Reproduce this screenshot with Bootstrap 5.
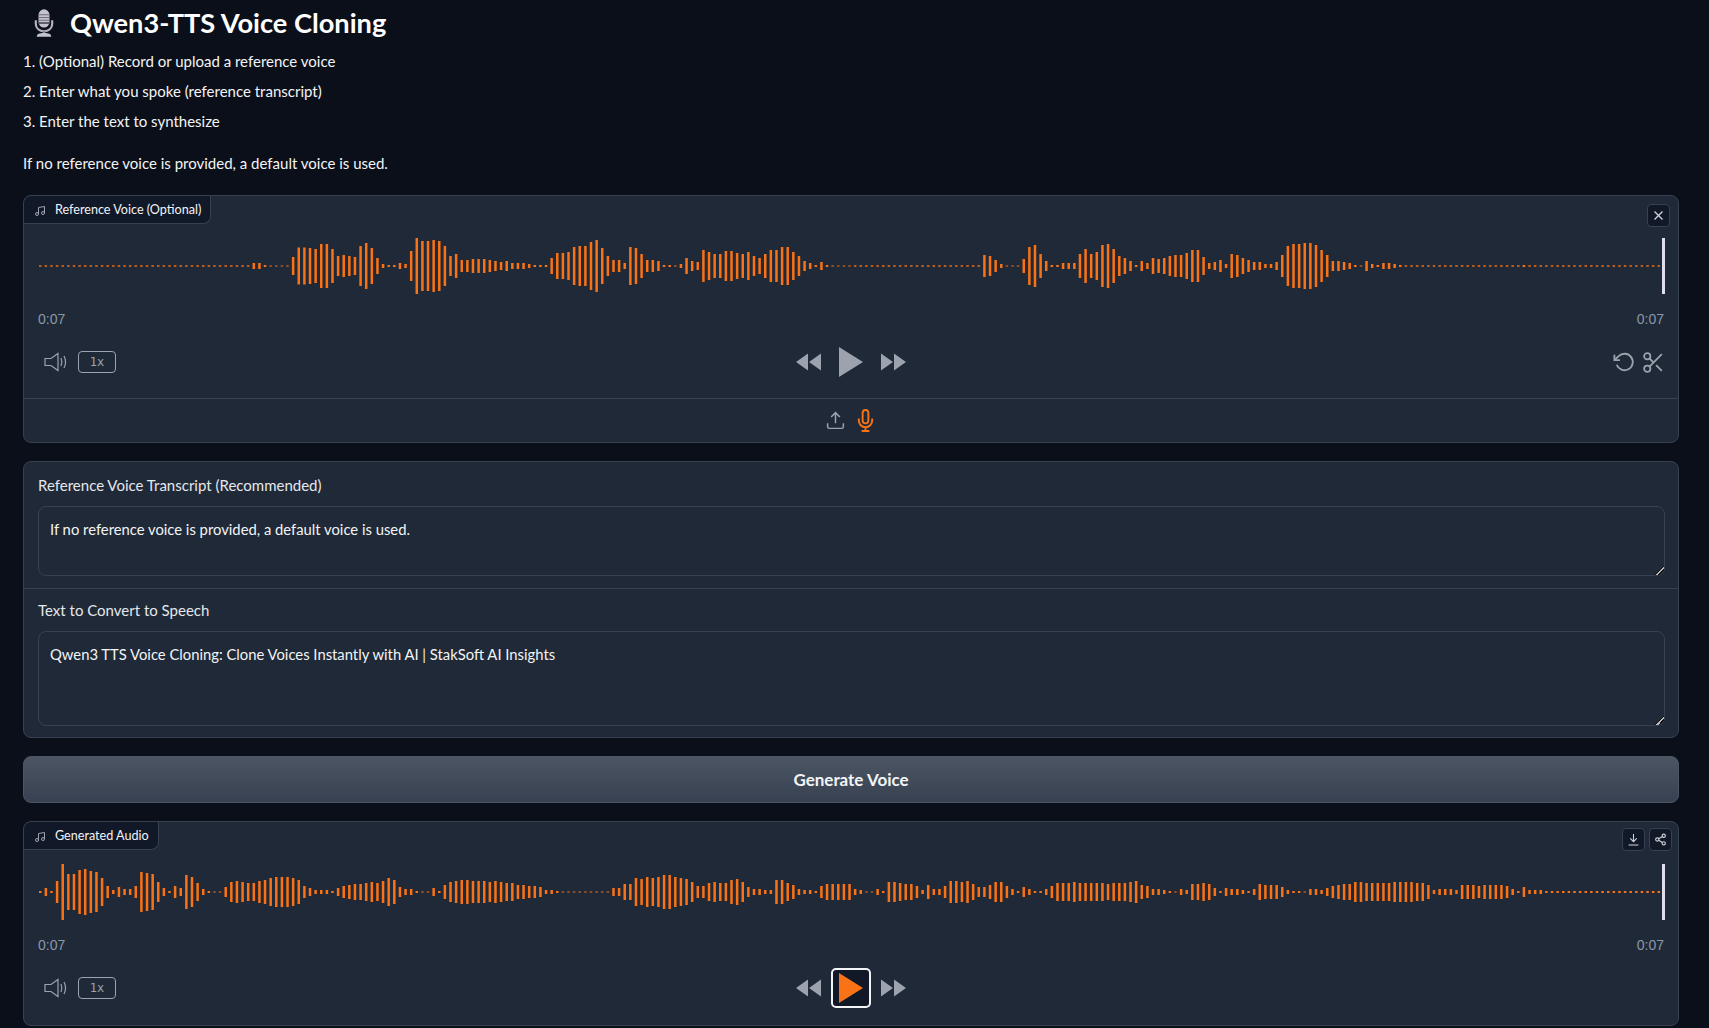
<!DOCTYPE html>
<html lang="en" data-bs-theme="dark">
<head>
  <meta charset="UTF-8">
  <meta name="viewport" content="width=device-width, initial-scale=1.0">
  <title>Qwen3-TTS Voice Cloning</title>
  <link href="https://cdn.jsdelivr.net/npm/bootstrap@5.3.2/dist/css/bootstrap.min.css" rel="stylesheet">
  <style>
    body {
      background-color: #0b0f19;
      color: #f3f4f6;
      font-family: Lato, "Liberation Sans", sans-serif;
      font-size: 15px;
      padding: 0 30px 0 23px;
      overflow: hidden;
    }
    .title-mic { margin-left: 11px; margin-right: 16px; }
    .app-title {
      font-size: 27.2px;
      font-weight: 700;
      line-height: 46px;
      margin: 0;
      color: #fff;
    }
    .steps {
      list-style-position: inside;
      padding: 0;
      margin: 3px 0 0;
      line-height: 24px;
    }
    .steps li { margin-bottom: 6px; }
    .intro-note { margin: 18px 0 20px; line-height: 24px; }
    .blk {
      background: #1f2937;
      border: 1px solid #374151;
      border-radius: 8px;
      margin-bottom: 18px;
    }
    .tab-label {
      background: #111827;
      border-right: 1px solid #374151;
      border-bottom: 1px solid #374151;
      border-radius: 8px 0 8px 0;
      height: 28px;
      padding: 2px 9px 0 10px;
      font-size: 12.6px;
      gap: 9px;
    }
    .tab-label svg { color: #9ca3af; }
    .mini-btn {
      width: 23px;
      height: 23px;
      background: #111827;
      border: 1px solid #374151;
      border-radius: 4px;
      color: #d1d5db;
    }
    .corner-btns { top: 6px; right: 6px; }
    .close-spot { top: 8px; right: 8px; }
    .wave-area { padding: 0 14px; margin-top: 10px; }
    .wave-svg { display: block; width: 100%; height: 64px; overflow: visible; }
    .time-row {
      padding: 0 14px;
      margin-top: 9px;
      font-family: "Liberation Sans", sans-serif;
      font-size: 14px;
      line-height: 24px;
      color: #8b98aa;
    }
    .ctrl-row { padding: 0 14px; margin-top: 16px; height: 30px; color: #9ca3af; }
    .speed-btn {
      width: 38px;
      height: 22px;
      margin-left: 10px;
      border: 1px solid #9ca3af;
      border-radius: 4px;
      font-family: "DejaVu Sans Mono", monospace;
      font-size: 12px;
      color: #9ca3af;
      background: none;
    }
    .speaker { margin-left: 6px; }
    .transport { gap: 18px; }
    .tools { gap: 5px; }
    .tools svg:last-child { margin-right: -2px; }
    .focus-play {
      width: 40px;
      height: 40px;
      margin: 0 -8px;
      background: #111827;
      border: 2px solid #f3f4f6;
      border-radius: 5px;
    }
    .source-bar {
      border-top: 1px solid #374151;
      margin-top: 21px;
      height: 44px;
      gap: 8px;
      color: #9ca3af;
    }
    .mic-on { color: #f97316; }
    .end-pad { padding-bottom: 22px; }
    .field-group { padding: 0 13px 12px 14px; }
    .field-group + .field-group { border-top: 1px solid #374151; padding-bottom: 11px; }
    .field-label { font-size: 15px; line-height: 24px; margin: 0 0 9px; padding-top: 9px; color: #e5e7eb; }
    .field-group:first-child .field-label { padding-top: 11px; }
    .field-text {
      background: #1f2937;
      border: 1px solid #374151;
      border-radius: 8px;
      color: #f3f4f6;
      font-size: 14.8px;
      padding: 10px 11px;
      line-height: 24px;
    }
    .box-short { height: 70px; }
    .box-tall { height: 95px; }
    .field-text::-webkit-resizer {
      background: linear-gradient(135deg, transparent 68%, #111 68%, #111 71%, #bbb 71%, #bbb 80%, #111 80%, #111 84%, transparent 84%);
    }
    .gen-btn {
      height: 47px;
      margin-bottom: 18px;
      background: linear-gradient(to bottom, #4b5563, #374151);
      border: 1px solid #4b5563;
      border-radius: 8px;
      color: #f3f4f6;
      font-weight: 700;
      font-size: 17px;
    }
  </style>
</head>
<body>

  <div class="d-flex align-items-center">
    <svg class="title-mic" width="20" height="30" viewBox="0 0 22 30">
      <rect x="5" y="0" width="12" height="20" rx="6" fill="#c4c2cc"/>
      <path d="M5 6h12M5 9h12M5 12h12" stroke="#6f6d78" stroke-width="1.2"/>
      <path d="M5 15h12" stroke="#55535c" stroke-width="2"/>
      <path d="M2 12v4c0 5 4 8 9 8s9-3 9-8v-4" fill="none" stroke="#b5b3bd" stroke-width="2.4"/>
      <path d="M11 23v3" stroke="#8c8a94" stroke-width="3"/>
      <path d="M3 30c0-3 3-4 8-4s8 1 8 4z" fill="#c4c2cc"/>
    </svg>
    <h1 class="app-title">Qwen3-TTS Voice Cloning</h1>
  </div>

  <ol class="steps">
    <li>(Optional) Record or upload a reference voice</li>
    <li>Enter what you spoke (reference transcript)</li>
    <li>Enter the text to synthesize</li>
  </ol>
  <p class="intro-note">If no reference voice is provided, a default voice is used.</p>

  <!-- reference voice -->
  <div class="blk position-relative">
    <div class="tab-label d-inline-flex align-items-center align-top">
      <svg width="12" height="12" viewBox="0 0 24 24" fill="none" stroke="currentColor" stroke-width="2"><path d="M9 18V5l12-2v13"/><circle cx="6" cy="18" r="3"/><circle cx="18" cy="16" r="3"/></svg>
      <span>Reference Voice (Optional)</span>
    </div>
    <button class="mini-btn close-spot position-absolute d-flex align-items-center justify-content-center p-0" aria-label="Clear">
      <svg width="11" height="11" viewBox="0 0 11 11" stroke="currentColor" stroke-width="1.3"><path d="M1.5 1.5l8 8M9.5 1.5l-8 8"/></svg>
    </button>
    <div class="wave-area">
      <svg class="wave-svg" id="waveRef"></svg>
    </div>
    <div class="time-row d-flex justify-content-between"><span>0:07</span><span>0:07</span></div>
    <div class="ctrl-row row g-0 flex-nowrap align-items-center">
      <div class="col d-flex align-items-center">
        <svg class="speaker" width="24" height="20" viewBox="0 0 24 20" fill="none" stroke="currentColor" stroke-width="1.2"><path d="M1 6.5h6L14 1.5v17L7 13.5H1z"/><path d="M17 6c1 2.5 1 5.500 0 8M20 4c1.800 3.500 1.800 8.500 0 12"/></svg>
        <button class="speed-btn p-0">1x</button>
      </div>
      <div class="col-auto d-flex align-items-center transport">
        <svg width="25" height="18" viewBox="0 0 25 18" fill="currentColor"><path d="M0 9l12-8.500v17zM13 9l12-8.500v17z"/></svg>
        <svg width="24" height="30" viewBox="0 0 24 30" fill="currentColor"><path d="M0 0l24 15L0 30z"/></svg>
        <svg width="25" height="18" viewBox="0 0 25 18" fill="currentColor"><path d="M25 9L13 .5v17zM12 9L0 .5v17z"/></svg>
      </div>
      <div class="col d-flex align-items-center justify-content-end tools">
        <svg width="23" height="22" viewBox="0 0 24 24" fill="none" stroke="currentColor" stroke-width="2"><path d="M1 4v6h6"/><path d="M3.510 15a9 9 0 1 0 2.130-9.360L1 10"/></svg>
        <svg width="25" height="25" viewBox="0 0 24 24" fill="none" stroke="currentColor" stroke-width="1.7"><circle cx="6" cy="6" r="3"/><circle cx="6" cy="18" r="3"/><path d="M20 4L8.120 15.880M14.470 14.480L20 20M8.120 8.120L12 12"/></svg>
      </div>
    </div>
    <div class="source-bar d-flex align-items-center justify-content-center">
      <svg width="21" height="21" viewBox="0 0 24 24" fill="none" stroke="currentColor" stroke-width="1.7"><path d="M21 15v4a2 2 0 0 1-2 2H5a2 2 0 0 1-2-2v-4"/><path d="M17 8l-5-5-5 5M12 3v12"/></svg>
      <svg class="mic-on" width="23" height="23" viewBox="0 0 24 24" fill="none" stroke="currentColor" stroke-width="2"><path d="M12 1a3 3 0 0 0-3 3v8a3 3 0 0 0 6 0V4a3 3 0 0 0-3-3z"/><path d="M19 10v2a7 7 0 0 1-14 0v-2M12 19v4M8 23h8"/></svg>
    </div>
  </div>

  <!-- text inputs -->
  <div class="blk">
    <div class="field-group">
      <label class="field-label d-block" for="refText">Reference Voice Transcript (Recommended)</label>
      <textarea class="form-control field-text box-short" id="refText">If no reference voice is provided, a default voice is used.</textarea>
    </div>
    <div class="field-group">
      <label class="field-label d-block" for="genText">Text to Convert to Speech</label>
      <textarea class="form-control field-text box-tall" id="genText">Qwen3 TTS Voice Cloning: Clone Voices Instantly with AI | StakSoft AI Insights</textarea>
    </div>
  </div>

  <button class="btn gen-btn w-100 d-block">Generate Voice</button>

  <!-- generated audio -->
  <div class="blk position-relative mb-0 end-pad">
    <div class="tab-label d-inline-flex align-items-center align-top">
      <svg width="12" height="12" viewBox="0 0 24 24" fill="none" stroke="currentColor" stroke-width="2"><path d="M9 18V5l12-2v13"/><circle cx="6" cy="18" r="3"/><circle cx="18" cy="16" r="3"/></svg>
      <span>Generated Audio</span>
    </div>
    <div class="corner-btns position-absolute d-flex gap-1">
      <button class="mini-btn d-flex align-items-center justify-content-center p-0" aria-label="Download">
        <svg width="13" height="13" viewBox="0 0 24 24" fill="none" stroke="currentColor" stroke-width="2"><path d="M12 2v14M6 10l6 6 6-6M3 22h18"/></svg>
      </button>
      <button class="mini-btn d-flex align-items-center justify-content-center p-0" aria-label="Share">
        <svg width="13" height="13" viewBox="0 0 24 24" fill="none" stroke="currentColor" stroke-width="2"><circle cx="18" cy="5" r="3"/><circle cx="6" cy="12" r="3"/><circle cx="18" cy="19" r="3"/><path d="M8.600 13.500l6.800 4M15.400 6.500l-6.800 4"/></svg>
      </button>
    </div>
    <div class="wave-area">
      <svg class="wave-svg" id="waveGen"></svg>
    </div>
    <div class="time-row d-flex justify-content-between"><span>0:07</span><span>0:07</span></div>
    <div class="ctrl-row row g-0 flex-nowrap align-items-center">
      <div class="col d-flex align-items-center">
        <svg class="speaker" width="24" height="20" viewBox="0 0 24 20" fill="none" stroke="currentColor" stroke-width="1.2"><path d="M1 6.5h6L14 1.5v17L7 13.5H1z"/><path d="M17 6c1 2.5 1 5.500 0 8M20 4c1.800 3.500 1.800 8.500 0 12"/></svg>
        <button class="speed-btn p-0">1x</button>
      </div>
      <div class="col-auto d-flex align-items-center transport">
        <svg width="25" height="18" viewBox="0 0 25 18" fill="currentColor"><path d="M0 9l12-8.500v17zM13 9l12-8.500v17z"/></svg>
        <div class="focus-play d-flex align-items-center justify-content-center">
          <svg width="24" height="30" viewBox="0 0 24 30" fill="#f97316"><path d="M0 0l24 15L0 30z"/></svg>
        </div>
        <svg width="25" height="18" viewBox="0 0 25 18" fill="currentColor"><path d="M25 9L13 .5v17zM12 9L0 .5v17z"/></svg>
      </div>
      <div class="col"></div>
    </div>
  </div>

  <script src="https://cdn.jsdelivr.net/npm/bootstrap@5.3.2/dist/js/bootstrap.bundle.min.js"></script>
  <script>
    // bar heights read off the two waveforms, left to right
    const flat = n => Array(n).fill(1.4);

    const refBars = [].concat(flat(38), [
      6,6,2,1,1,1,1,18,37,37,36,34,44,44,34,20,22,20,18,40,46,36,16,4,2,2,6,4,30,56,50,50,52,50,40,20,24,12,12,14,14,14,12,10,8,10,6,6,6,4,2,2,2,
      16,26,26,28,38,40,40,48,52,36,20,12,12,6,38,36,24,12,12,10,2,2,1,4,16,10,8,32,28,24,24,30,30,26,24,28,20,16,24,32,32,38,38,28,20,10,6,2,8,2,1,1,1,1
    ], flat(23), [
      22,20,12,4,1,1,1,14,38,42,24,10,2,2,6,6,6,24,34,24,28,42,44,34,20,16,10,2,10,6,16,14,16,20,22,22,26,32,32,18,6,8,12,4,24,22,16,12,8,8,4,4,8,
      22,40,44,44,46,46,42,32,22,10,10,8,6,2,1,10,4,2,6,6,4,2
    ], flat(21), [2], flat(24));

    const genBars = [].concat([
      2,8,2,22,56,36,36,44,46,42,40,28,12,4,10,6,6,12,40,38,36,20,8,2,12,8,34,30,18,6,2,1,1,10,20,22,20,18,18,22,
      24,28,30,30,30,28,24,12,8,4,4,4,2,8,12,14,16,16,18,20,18,22,28,24,10,6,6,2,1,1,8,2,14,20,22,24,24,22,22,22,
      20,22,20,18,18,14,14,12,12,10,4,4,2,1,1,1,1,1,1,1,1,1,8,8,
      16,16,28,26,30,28,30,34,34,30,28,26,20,12,12,18,20,18,18,24,26,20,10,6,6,4,4,24,24,18,14,6,4,4,2,12,16,16,16,16,
      16,6,4,1,1,6,2,20,20,18,16,16,12,4,14,6,6,12,22,22,20,22,16,10,10,14,20,20,12,6,2,10,6,2,2,6,12,18,18,18,
      20,18,18,18,18,18,16,18,18,18,20,22,14,12,6,6,4,2,1,6,4,16,16,18,16,8,2,
      8,6,6,4,2,6,16,14,14,14,10,4,2,2,1,6,6,4,8,12,14,16,16,20,20,18,18,18,18,18,20,20,20,20,18,18,14,4,6,6,6,4,14,14,14,12,14,14,14,14,12,6,2,10,4,4,4,2,2
    ], Array(19).fill(2));

    function drawWave(id, bars) {
      const svg = document.getElementById(id);
      const ns = 'http://www.w3.org/2000/svg';
      const addRect = (x, y, w, h, fill) => {
        const r = document.createElementNS(ns, 'rect');
        r.setAttribute('x', x);
        r.setAttribute('y', y);
        r.setAttribute('width', w);
        r.setAttribute('height', h);
        r.setAttribute('fill', fill);
        svg.appendChild(r);
      };
      bars.forEach((h, i) => addRect(1 + i * 5.62, 32 - h / 2, 2.5, h, '#f97316'));
      addRect(1624, 4, 3, 56, '#e0dff0');
    }
    drawWave('waveRef', refBars);
    drawWave('waveGen', genBars);
  </script>
</body>
</html>
